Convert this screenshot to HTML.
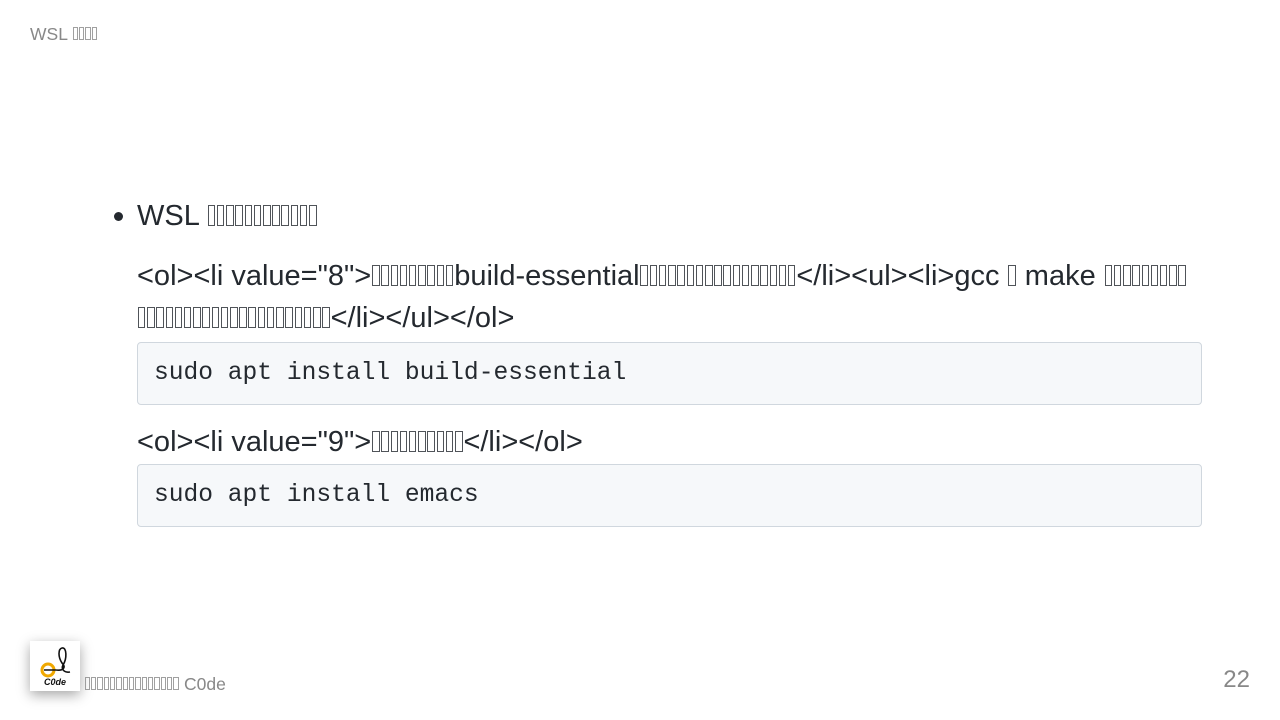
<!DOCTYPE html>
<html><head><meta charset="utf-8"><style>
html,body{margin:0;padding:0;width:1280px;height:720px;background:#fff;overflow:hidden;font-family:"Liberation Sans",sans-serif;color:#24292f;position:relative}
.b{display:inline-block;width:.19em;height:.64em;border:1px solid currentColor;margin:0 .03em;vertical-align:-0.02em;opacity:.8}
.hdr{position:absolute;left:30px;top:24px;font-size:17.5px;color:#888}
.main{position:absolute;left:137px;top:196px;width:1065px;font-size:29px}
.li{position:relative;height:40px;line-height:40px}
.li:before{content:"";position:absolute;left:-23px;top:16px;width:9px;height:9px;border-radius:50%;background:#24292f}
.p{line-height:42px;margin-top:19px;white-space:nowrap}
.code{margin-top:3px;height:63px;box-sizing:border-box;border:1px solid #d0d7de;border-radius:4px;background:#f6f8fa;font-family:"Liberation Mono",monospace;font-size:24.6px;line-height:61px;padding-left:16px}
.ft{position:absolute;left:84px;top:674px;font-size:17.5px;color:#888}
.pg{position:absolute;right:30px;top:666px;font-size:24px;color:#888}
.logo{position:absolute;left:30px;top:641px;width:50px;height:50px;background:#fff;box-shadow:0 4px 12px rgba(0,0,0,.35)}
</style></head><body>
<div class="hdr">WSL <span class="b"></span><span class="b"></span><span class="b"></span><span class="b"></span></div>
<div class="main">
<div class="li">WSL <span class="b"></span><span class="b"></span><span class="b"></span><span class="b"></span><span class="b"></span><span class="b"></span><span class="b"></span><span class="b"></span><span class="b"></span><span class="b"></span><span class="b"></span><span class="b"></span></div>
<div class="p">&lt;ol&gt;&lt;li value="8"&gt;<span class="b"></span><span class="b"></span><span class="b"></span><span class="b"></span><span class="b"></span><span class="b"></span><span class="b"></span><span class="b"></span><span class="b"></span>build-essential<span class="b"></span><span class="b"></span><span class="b"></span><span class="b"></span><span class="b"></span><span class="b"></span><span class="b"></span><span class="b"></span><span class="b"></span><span class="b"></span><span class="b"></span><span class="b"></span><span class="b"></span><span class="b"></span><span class="b"></span><span class="b"></span><span class="b"></span>&lt;/li&gt;&lt;ul&gt;&lt;li&gt;gcc <span class="b"></span> make <span class="b"></span><span class="b"></span><span class="b"></span><span class="b"></span><span class="b"></span><span class="b"></span><span class="b"></span><span class="b"></span><span class="b"></span><br><span class="b"></span><span class="b"></span><span class="b"></span><span class="b"></span><span class="b"></span><span class="b"></span><span class="b"></span><span class="b"></span><span class="b"></span><span class="b"></span><span class="b"></span><span class="b"></span><span class="b"></span><span class="b"></span><span class="b"></span><span class="b"></span><span class="b"></span><span class="b"></span><span class="b"></span><span class="b"></span><span class="b"></span>&lt;/li&gt;&lt;/ul&gt;&lt;/ol&gt;</div>
<div class="code">sudo apt install build-essential</div>
<div class="p" style="margin-top:16px">&lt;ol&gt;&lt;li value="9"&gt;<span class="b"></span><span class="b"></span><span class="b"></span><span class="b"></span><span class="b"></span><span class="b"></span><span class="b"></span><span class="b"></span><span class="b"></span><span class="b"></span>&lt;/li&gt;&lt;/ol&gt;</div>
<div class="code" style="margin-top:1px">sudo apt install emacs</div>
</div>
<div class="logo"><svg width="50" height="50" viewBox="0 0 50 50">
<circle cx="18" cy="29" r="6" fill="none" stroke="#f0a800" stroke-width="3"/>
<path d="M14 29 H26 M26 29 C34 30 36 26 32 22 C28 16 28 8 32 7 C37 6 37 18 33 24 C31 28 34 32 40 31" fill="none" stroke="#111" stroke-width="1.6"/>
<text x="25" y="44" font-size="9" font-style="italic" font-weight="bold" text-anchor="middle" font-family="Liberation Sans" fill="#111">C0de</text>
</svg></div>
<div class="ft"><span class="b"></span><span class="b"></span><span class="b"></span><span class="b"></span><span class="b"></span><span class="b"></span><span class="b"></span><span class="b"></span><span class="b"></span><span class="b"></span><span class="b"></span><span class="b"></span><span class="b"></span><span class="b"></span><span class="b"></span> C0de</div>
<div class="pg">22</div>
</body></html>
